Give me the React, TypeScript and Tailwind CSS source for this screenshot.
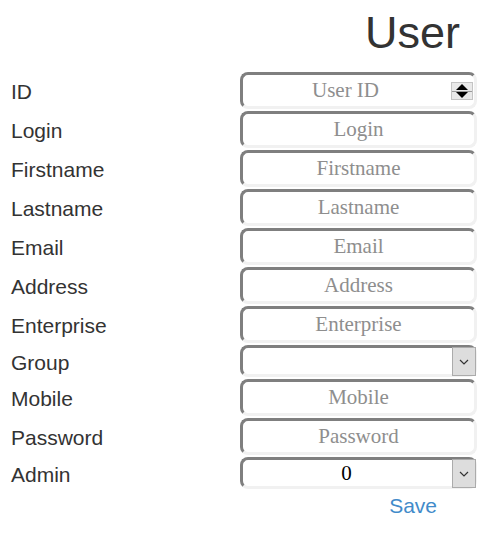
import React from "react"

const fieldBox =
  "w-full h-full rounded-[8px] border-[3px] border-t-[#7f7f7f] border-l-[#7f7f7f] border-r-[#f1f1f1] border-b-[#f1f1f1] bg-white text-center text-[21px] text-black outline-none placeholder:text-[#8e8e8e]"

const serif = { fontFamily: '"Liberation Serif", "Times New Roman", serif' }

const Row = ({ label, tall = true, children }: { label: string; tall?: boolean; children: React.ReactNode }) => (
  <div className={`flex ${tall ? "h-[39px]" : "h-[34px]"}`}>
    <label className="w-[240px] shrink-0 pl-[11px] pt-[1px] flex items-center text-[21px] text-[#333]">{label}</label>
    <div className={`relative w-[237px] ${tall ? "h-[37px]" : "h-[32px]"}`}>{children}</div>
  </div>
)

const Spinner = () => (
  <div className="absolute right-[4px] top-[10px] w-[22px] h-[18px] flex flex-col bg-[#e9e9e9] border border-[#c4c4c4] pointer-events-none">
    <div className="flex-1 flex items-center justify-center border-b border-[#9a9a9a]">
      <svg width="12" height="6" viewBox="0 0 12 6"><path d="M0 6 L6 0 L12 6 Z" fill="#000" /></svg>
    </div>
    <div className="flex-1 flex items-center justify-center">
      <svg width="12" height="6" viewBox="0 0 12 6"><path d="M0 0 L6 6 L12 0 Z" fill="#000" /></svg>
    </div>
  </div>
)

const Arrow = () => (
  <div className="absolute right-[1px] top-[2px] bottom-[1px] w-[24px] flex items-center justify-center bg-[#dddddd] border border-[#ababab] pointer-events-none">
    <svg width="10" height="6" viewBox="0 0 10 6"><path d="M1 1 L5 5 L9 1" fill="none" stroke="#333" strokeWidth="1.2" /></svg>
  </div>
)

const Select = ({ value, options }: { value: string; options: string[] }) => (
  <>
    <select
      defaultValue={value}
      className={`${fieldBox} appearance-none pr-[24px] [text-align-last:center] leading-none`}
      style={serif}
    >
      {options.map((o) => (
        <option key={o} value={o}>{o}</option>
      ))}
    </select>
    <Arrow />
  </>
)

export default function App() {
  const inputs = ["Login", "Firstname", "Lastname", "Email", "Address", "Enterprise"]
  return (
    <div className="w-[503px] min-h-[542px] bg-white" style={{ fontFamily: '"Liberation Sans", Arial, sans-serif' }}>
      <div className="h-[72px] pt-[10px] pr-[43px] flex justify-end">
        <h1 className="text-[45px] leading-[45px] text-[#333]">User</h1>
      </div>
      <form>
        <Row label="ID">
          <input type="text" placeholder="User ID" className={`${fieldBox} pr-[26px]`} style={serif} />
          <Spinner />
        </Row>
        {inputs.map((name) => (
          <Row key={name} label={name}>
            <input type="text" placeholder={name} className={fieldBox} style={serif} />
          </Row>
        ))}
        <Row label="Group" tall={false}>
          <Select value="" options={[""]} />
        </Row>
        <Row label="Mobile">
          <input type="text" placeholder="Mobile" className={fieldBox} style={serif} />
        </Row>
        <Row label="Password">
          <input type="password" placeholder="Password" className={fieldBox} style={serif} />
        </Row>
        <Row label="Admin" tall={false}>
          <Select value="0" options={["0", "1"]} />
        </Row>
        <div className="flex justify-end pr-[66px]">
          <button type="button" className="text-[21px] text-[#428bca] leading-[30px]">Save</button>
        </div>
      </form>
    </div>
  )
}
